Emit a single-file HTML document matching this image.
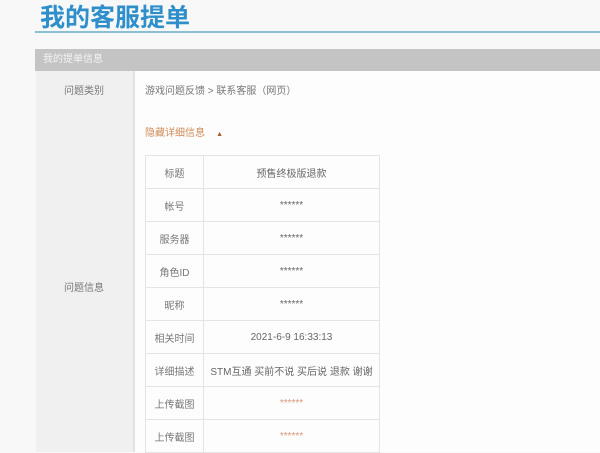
<!DOCTYPE html>
<html><head><meta charset="utf-8"><style>
body{margin:0;width:600px;height:452px;background:#f8f8f9;font-family:"Liberation Sans","Noto Sans CJK SC",sans-serif;position:relative;overflow:hidden;color:#666}
.t{position:absolute;left:40px;top:-2px;font-size:25px;font-weight:bold;color:#2f8fcb;letter-spacing:0px}
.ln{position:absolute;left:35px;top:31px;width:565px;height:2px;background:#8cbfcf}
.hd{position:absolute;left:35px;top:49px;width:565px;height:22px;background:#c4c4c4;color:#f4f4f4;font-size:10px;line-height:22px;padding-left:8px;box-sizing:border-box}
.lc{position:absolute;left:36px;top:71px;width:97px;height:381px;background:#f0f0f1;border-right:2px solid #e2e2e2}
.rc{position:absolute;left:135px;top:71px;width:465px;height:381px;background:#fdfdfd}
.s{position:absolute;font-size:10px;color:#777}
table{position:absolute;left:145px;top:155px;border-collapse:collapse;font-size:10px;color:#666}
td{border:1px solid #e4e4e4;height:32px;padding:0;text-align:center}
td:first-child{width:57px;color:#777}td:last-child{width:175px}
.o{color:#d9967a}
</style></head><body>
<div class="t">我的客服提单</div><div class="ln"></div>
<div class="hd">我的提单信息</div>
<div class="lc"></div><div class="rc"></div>
<div class="s" style="left:64px;top:82px">问题类别</div>
<div class="s" style="left:64px;top:279px">问题信息</div>
<div class="s" style="left:145px;top:82px">游戏问题反馈 &gt; 联系客服（网页）</div>
<div class="s" style="left:145px;top:124px;color:#d08a55">隐藏详细信息 &nbsp;&nbsp;&nbsp;<span style="font-size:7px;color:#b05a2a">▲</span></div>
<table>
<tr><td>标题</td><td>预售终极版退款</td></tr>
<tr><td>帐号</td><td>******</td></tr>
<tr><td>服务器</td><td>******</td></tr>
<tr><td>角色ID</td><td>******</td></tr>
<tr><td>昵称</td><td>******</td></tr>
<tr><td>相关时间</td><td>2021-6-9 16:33:13</td></tr>
<tr><td>详细描述</td><td>STM互通 买前不说 买后说 退款 谢谢</td></tr>
<tr><td>上传截图</td><td class="o">******</td></tr>
<tr><td>上传截图</td><td class="o">******</td></tr>
</table>
</body></html>
